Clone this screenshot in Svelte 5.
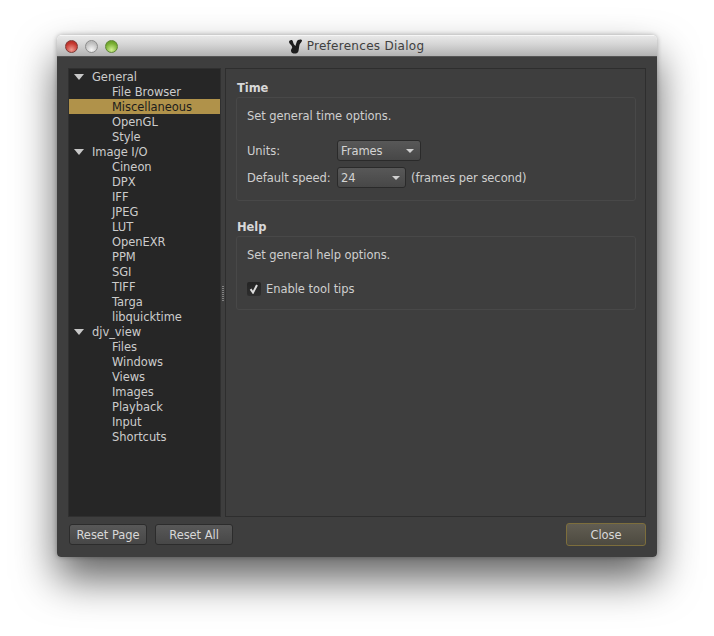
<script>
	const tree = [
		{ name: "General", items: ["File Browser", "Miscellaneous", "OpenGL", "Style"] },
		{ name: "Image I/O", items: ["Cineon", "DPX", "IFF", "JPEG", "LUT", "OpenEXR", "PPM", "SGI", "TIFF", "Targa", "libquicktime"] },
		{ name: "djv_view", items: ["Files", "Windows", "Views", "Images", "Playback", "Input", "Shortcuts"] }
	];
	const selected = "Miscellaneous";
</script>

<div class="desktop">
<main class="window">
	<header class="titlebar">
		<div class="lights">
			<span class="light red"></span>
			<span class="light grey"></span>
			<span class="light green"></span>
		</div>
		<div class="title">
			<svg width="15" height="15" viewBox="0 0 15 15" aria-hidden="true">
				<path d="M1 3 C1 1.5 3 0.5 4.2 1.2 C5.2 2 5 4 6 5.5 L7.5 7 C8.2 5 8.5 2 10 1 C11.5 0.2 13.8 0.3 14 1.2 C14.2 2.5 12.5 3.8 11.8 5 C11 7 11 10 10.5 12 C10 14 8.5 14.6 6.8 14.6 C5 14.6 3.2 14 3 12 C2.8 10 4.4 9.5 4.2 8 C4 6 1 5 1 3 Z" fill="#1c1c1c"/>
			</svg>
			<span>Preferences Dialog</span>
		</div>
	</header>

	<div class="body">
		<div class="split">
			<nav class="tree">
				{#each tree as group}
					<div class="row group"><span class="arrow"></span>{group.name}</div>
					{#each group.items as item}
						<div class="row child" class:selected={item === selected}>{item}</div>
					{/each}
				{/each}
			</nav>
			<div class="handle"><span class="grip"></span></div>
			<section class="page">
				<h2>Time</h2>
				<div class="box time">
					<p>Set general time options.</p>
					<div class="form">
						<div class="field">
							<label for="units">Units:</label>
							<button id="units" class="combo units">Frames<span class="caret"></span></button>
						</div>
						<div class="field">
							<label for="speed">Default speed:</label>
							<button id="speed" class="combo speed">24<span class="caret"></span></button>
							<span>(frames per second)</span>
						</div>
					</div>
				</div>
				<h2 class="second">Help</h2>
				<div class="box help">
					<p>Set general help options.</p>
					<div class="check">
						<span class="checkbox">
							<svg width="10" height="10" viewBox="0 0 10 10" aria-hidden="true">
								<path d="M1.6 5.2 L4 8.6 L8 1" fill="none" stroke="#dcdcdc" stroke-width="2"/>
							</svg>
						</span>
						Enable tool tips
					</div>
				</div>
			</section>
		</div>
		<footer class="buttons">
			<button class="btn">Reset Page</button>
			<button class="btn">Reset All</button>
			<button class="btn close">Close</button>
		</footer>
	</div>
</main>
</div>

<style>
	:global(body) {
		background: #fff;
	}
	.desktop {
		height: 636px;
		box-sizing: border-box;
		padding: 35px 0 0 57px;
		overflow: hidden;
	}
	.window {
		width: 600px;
		height: 522px;
		border-radius: 5px 5px 4px 4px;
		box-shadow: 0 22px 42px rgba(0, 0, 0, 0.62), 0 0 5px rgba(0, 0, 0, 0.3);
		font-family: "DejaVu Sans", sans-serif;
		font-size: 11.5px;
		letter-spacing: -0.05px;
		color: #cfcfcf;
		display: flex;
		flex-direction: column;
		overflow: hidden;
	}
	.titlebar {
		height: 22px;
		flex: none;
		position: relative;
		display: flex;
		align-items: center;
		justify-content: center;
		background: linear-gradient(#e8e8e8, #d6d6d6 40%, #b2b2b2);
		border-top: 1px solid #f6f6f6;
		border-bottom: 1px solid #555;
		box-sizing: border-box;
	}
	.lights {
		position: absolute;
		left: 8px;
		top: 4px;
		display: flex;
		gap: 7px;
	}
	.light {
		width: 13px;
		height: 13px;
		border-radius: 50%;
		border: 1px solid #6f6f6f;
		box-sizing: border-box;
	}
	.red {
		background: radial-gradient(circle at 50% 80%, #f09a90, #c4362e 65%, #a82a26);
		border-color: #7e3a36;
	}
	.grey {
		background: radial-gradient(circle at 50% 80%, #f6f6f6, #bcbcbc 70%);
		border-color: #8c8c8c;
	}
	.green {
		background: radial-gradient(circle at 50% 80%, #d0f090, #76ac30 65%, #5f9426);
		border-color: #5f8636;
	}
	.title {
		display: flex;
		align-items: center;
		gap: 4px;
		color: #404040;
		font-size: 12px;
		letter-spacing: 0.28px;
		margin-left: -2px;
	}
	.body {
		flex: 1;
		min-height: 0;
		background: #3e3e3e;
		padding: 11px;
		display: flex;
		flex-direction: column;
		gap: 6px;
	}
	.split {
		flex: 1;
		min-height: 0;
		display: flex;
	}
	.tree {
		width: 153px;
		box-sizing: border-box;
		background: #262626;
		border: 1px solid #303030;
		flex: none;
	}
	.row {
		height: 15px;
		line-height: 17px;
		white-space: nowrap;
		color: #cccccc;
	}
	.group {
		position: relative;
		padding-left: 23px;
	}
	.arrow {
		position: absolute;
		left: 5px;
		top: 5px;
		border-left: 5px solid transparent;
		border-right: 5px solid transparent;
		border-top: 6px solid #c8c8c8;
	}
	.child {
		padding-left: 43px;
	}
	.selected {
		background: #b0924a;
		color: #1c1c1c;
	}
	.handle {
		width: 4px;
		flex: none;
		display: flex;
		align-items: center;
		justify-content: center;
	}
	.grip {
		width: 2px;
		height: 16px;
		margin-top: 2px;
		background: repeating-linear-gradient(#808080 0 1px, transparent 1px 2px);
	}
	.page {
		flex: 1;
		border: 1px solid #2e2e2e;
		padding: 11px 9px 0 10px;
		box-sizing: border-box;
	}
	h2 {
		margin: 0 0 1px 1px;
		font-size: 11.5px;
		line-height: 16px;
		font-weight: bold;
		color: #d8d8d8;
	}
	.second {
		margin-top: 18px;
	}
	.box {
		border: 1px solid #484848;
		border-radius: 3px;
		padding: 10px 10px 0;
		box-sizing: border-box;
	}
	.time {
		height: 104px;
	}
	.help {
		height: 74px;
	}
	p {
		margin: 0;
		height: 15px;
		line-height: 17px;
	}
	.form {
		margin-top: 17px;
		display: flex;
		flex-direction: column;
		gap: 6px;
	}
	.field {
		display: flex;
		align-items: center;
	}
	.field label {
		width: 90px;
		white-space: nowrap;
	}
	.combo {
		height: 21px;
		box-sizing: border-box;
		display: flex;
		align-items: center;
		justify-content: space-between;
		padding: 0 5px 0 3px;
		font: inherit;
		letter-spacing: inherit;
		color: #d4d4d4;
		background: linear-gradient(#585858, #474747);
		border: 1px solid #2a2a2a;
		border-radius: 3px;
	}
	.units {
		width: 84px;
		padding-right: 6px;
	}
	.speed {
		width: 69px;
		margin-right: 5px;
	}
	.caret {
		border-left: 4px solid transparent;
		border-right: 4px solid transparent;
		border-top: 4px solid #d0d0d0;
	}
	.check {
		margin-top: 19px;
		display: flex;
		align-items: center;
		gap: 5px;
		height: 15px;
	}
	.checkbox {
		width: 14px;
		height: 14px;
		background: linear-gradient(#242424, #2e2e2e);
		border-radius: 2px;
		display: flex;
		align-items: center;
		justify-content: center;
	}
	.buttons {
		display: flex;
		align-items: center;
		gap: 8px;
		height: 23px;
	}
	.btn {
		width: 78px;
		height: 21px;
		box-sizing: border-box;
		padding: 0;
		font: inherit;
		letter-spacing: inherit;
		color: #d8d8d8;
		background: linear-gradient(#585858, #474747);
		border: 1px solid #2c2c2c;
		border-radius: 3px;
	}
	.btn:first-child {
		margin-left: 1px;
	}
	.close {
		width: 80px;
		height: 23px;
		margin-left: auto;
		background: linear-gradient(#615d52, #4d4a40);
		border-color: #7d6e3c;
	}
</style>
